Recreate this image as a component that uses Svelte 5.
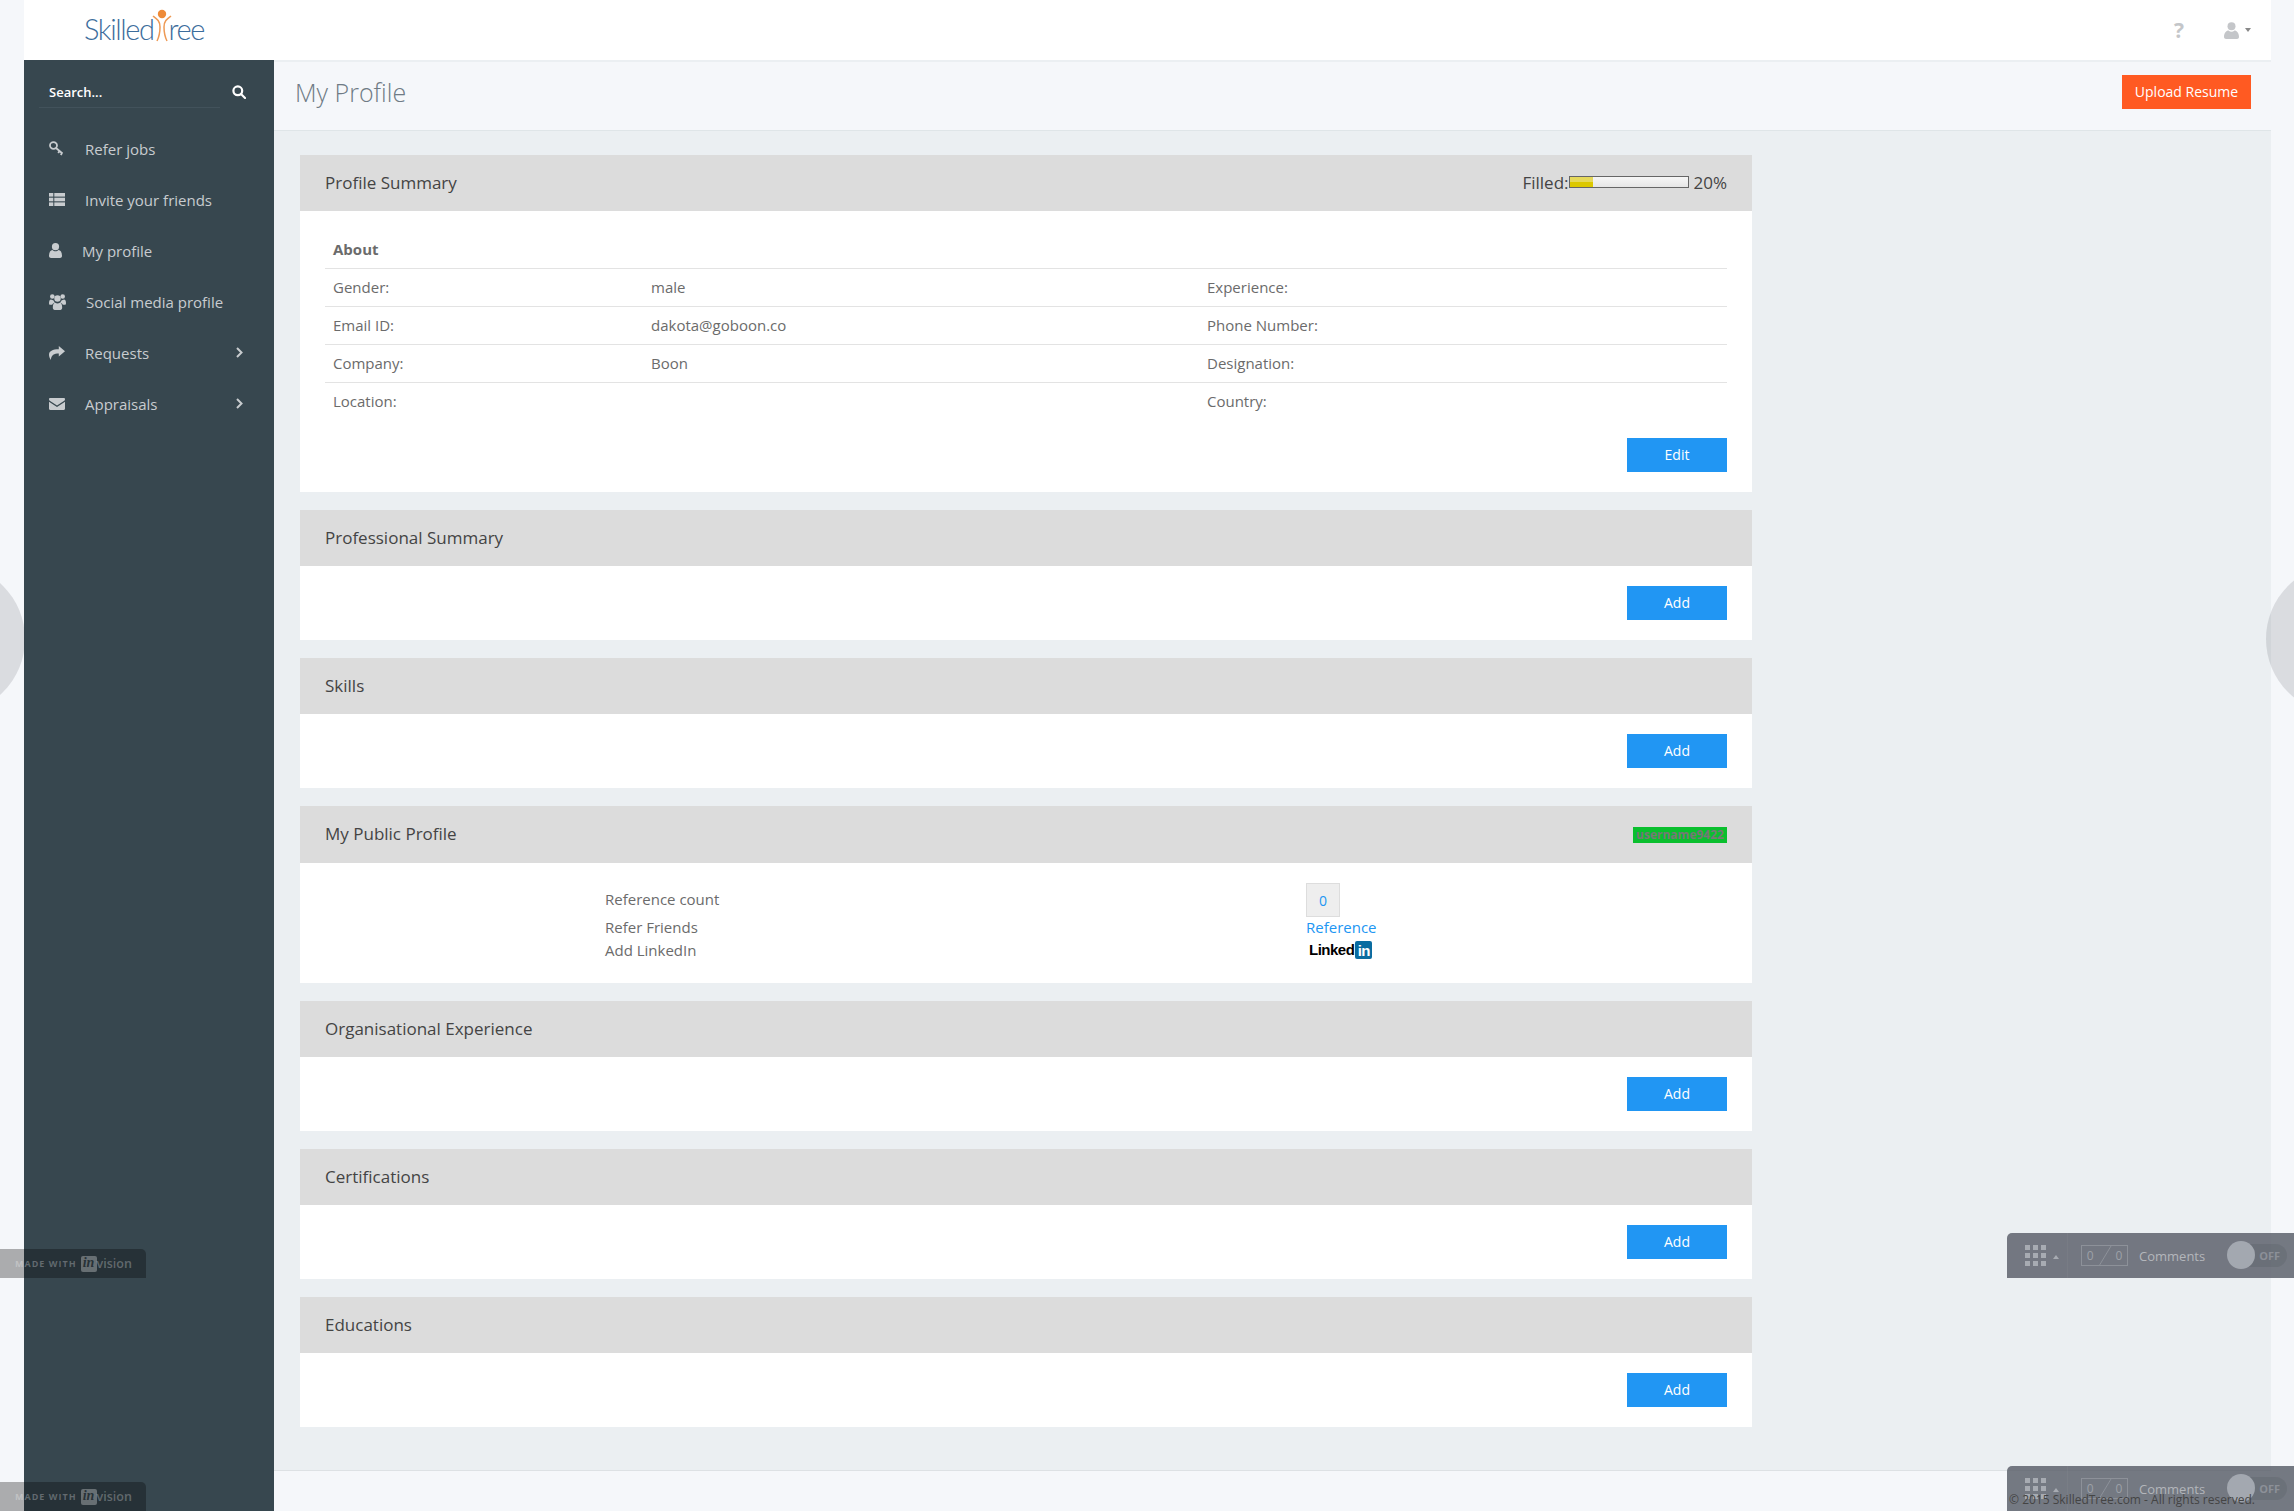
<script>
    const menu = [
        { label: "Refer jobs", icon: "key" },
        { label: "Invite your friends", icon: "list" },
        { label: "My profile", icon: "user" },
        { label: "Social media profile", icon: "users" },
        { label: "Requests", icon: "share", arrow: true },
        { label: "Appraisals", icon: "mail", arrow: true }
    ];

    const about = [
        ["Gender:", "male", "Experience:"],
        ["Email ID:", "dakota@goboon.co", "Phone Number:"],
        ["Company:", "Boon", "Designation:"],
        ["Location:", "", "Country:"]
    ];
</script>

{#snippet addCard(title)}
    <section class="card">
        <div class="card-head"><span>{title}</span></div>
        <div class="add-body"><button class="btn">Add</button></div>
    </section>
{/snippet}

{#snippet commentBar(cls)}
    <div class="comment-bar {cls}">
        <div class="cb-grid">
            <svg width="21" height="21" viewBox="0 0 21 21" fill="#a7abb2">
                <rect x="0" y="0" width="5" height="5"/><rect x="8" y="0" width="5" height="5"/><rect x="16" y="0" width="5" height="5"/>
                <rect x="0" y="8" width="5" height="5"/><rect x="8" y="8" width="5" height="5"/><rect x="16" y="8" width="5" height="5"/>
                <rect x="0" y="16" width="5" height="5"/><rect x="8" y="16" width="5" height="5"/><rect x="16" y="16" width="5" height="5"/>
            </svg>
            <i class="cb-caret"></i>
        </div>
        <div class="cb-rest">
            <div class="cb-count">
                <span>0</span>
                <svg width="14" height="20" viewBox="0 0 14 20"><path d="M1 20L13 0" stroke="#8d9199" fill="none"/></svg>
                <span>0</span>
            </div>
            <span class="cb-label">Comments</span>
            <div class="cb-toggle"><i class="cb-knob"></i><span>OFF</span></div>
        </div>
    </div>
{/snippet}

{#snippet invision(cls)}
    <div class="invision {cls}">
        <span class="inv-made">MADE WITH</span>
        <span class="inv-in">in</span>
        <span class="inv-vision">vision</span>
    </div>
{/snippet}

<div class="page">
    <header class="topbar">
        <div class="logo">
            <span>Skilled</span>
            <svg class="logo-man" width="20" height="33" viewBox="0 0 20 33" fill="none" stroke="#ee9a55" stroke-width="1.500">
                <circle cx="10" cy="5" r="4.200" fill="#ee8a37" stroke="none"/>
                <path d="M1 7C5 10 8 12 8 18C8 24 7 28 5 32"/>
                <path d="M19 7C15 10 12 12 12 18C12 24 13 28 15 32"/>
            </svg>
            <span>ree</span>
        </div>
        <div class="top-icons">
            <span class="help">?</span>
            <svg width="15" height="17" viewBox="0 0 15 17" fill="#c4c6c9">
                <circle cx="7.500" cy="4.200" r="4"/>
                <path d="M0 15C0 10 3 8.500 4.500 8.500C5.500 9.300 6.500 9.700 7.500 9.700C8.500 9.700 9.500 9.300 10.500 8.500C12 8.500 15 10 15 15C15 16.300 14 17 13 17H2C1 17 0 16.300 0 15Z"/>
            </svg>
            <i class="top-caret"></i>
        </div>
    </header>

    <div class="main">
        <aside class="sidebar">
            <div class="search">
                <span>Search...</span>
                <svg width="14" height="14" viewBox="0 0 14 14" fill="none" stroke="#fff" stroke-width="2.200">
                    <circle cx="5.800" cy="5.800" r="4.400"/><path d="M9 9L13 13" stroke-linecap="round"/>
                </svg>
            </div>
            <nav class="menu">
                {#each menu as item}
                    <div class="menu-item">
                        <span class="menu-icon">
                            {#if item.icon === "key"}
                                <svg width="15" height="15" viewBox="0 0 15 15" fill="none" stroke="#c8cccf" stroke-width="1.800">
                                    <ellipse cx="4.500" cy="4.500" rx="3.500" ry="3.300"/><path d="M7 7L13.500 12.500M10.500 10L9.200 12M13 12L11.800 14"/>
                                </svg>
                            {:else if item.icon === "list"}
                                <svg width="16" height="13" viewBox="0 0 16 13" fill="#c8cccf">
                                    <rect width="4.300" height="3.600"/><rect x="5.300" width="10.700" height="3.600"/>
                                    <rect y="4.700" width="4.300" height="3.600"/><rect x="5.300" y="4.700" width="10.700" height="3.600"/>
                                    <rect y="9.400" width="4.300" height="3.600"/><rect x="5.300" y="9.400" width="10.700" height="3.600"/>
                                </svg>
                            {:else if item.icon === "user"}
                                <svg width="13" height="15" viewBox="0 0 13 15" fill="#c8cccf">
                                    <circle cx="6.500" cy="3.700" r="3.600"/>
                                    <path d="M0 13C0 9 1.500 7 3.500 7C4.300 7.800 5.300 8.300 6.500 8.300C7.700 8.300 8.700 7.800 9.500 7C11.500 7 13 9 13 13C13 14.300 12 15 11 15H2C1 15 0 14.300 0 13Z"/>
                                </svg>
                            {:else if item.icon === "users"}
                                <svg width="17" height="16" viewBox="0 0 17 16" fill="#c8cccf">
                                    <circle cx="3.300" cy="2.500" r="2.300"/><circle cx="13.700" cy="2.500" r="2.300"/><circle cx="8.500" cy="4.500" r="3.200"/>
                                    <path d="M0 9C0 6.500 1 5.500 2 5.500C2.800 6 3.500 6.200 4.300 6.300C4.800 7.300 5.300 8 6 8.500C4.500 9 3.600 9.800 3.200 10.800H1C.3 10.800 0 10 0 9ZM17 9C17 6.500 16 5.500 15 5.500C14.200 6 13.500 6.200 12.700 6.300C12.200 7.300 11.700 8 11 8.500C12.500 9 13.400 9.800 13.800 10.800H16C16.700 10.800 17 10 17 9Z"/>
                                    <path d="M3.800 13.500C3.800 10.500 4.800 8.800 6.200 8.800C7 9.300 7.700 9.600 8.500 9.600C9.300 9.600 10 9.300 10.800 8.800C12.200 8.800 13.200 10.500 13.200 13.500C13.200 15 12.400 16 11.300 16H5.700C4.600 16 3.800 15 3.800 13.500Z"/>
                                </svg>
                            {:else if item.icon === "share"}
                                <svg width="16" height="14" viewBox="0 0 16 14" fill="#c8cccf">
                                    <path d="M9.800 0L16 5.300L9.800 10.600V7.400C5 7.400 2.400 8.600 1.800 14C.6 12 0 10.500 0 8.800C0 5 3.500 3.200 9.800 3.200Z"/>
                                </svg>
                            {:else}
                                <svg width="16" height="12" viewBox="0 0 16 12" fill="#c8cccf">
                                    <path d="M0 1.200C0 .5 .5 0 1.200 0H14.800C15.500 0 16 .5 16 1.200C16 2 15.500 2.700 14.900 3.100L8 7.500L1.100 3.100C.5 2.700 0 2 0 1.200Z"/>
                                    <path d="M0 3.800L8 9L16 3.800V10.800C16 11.500 15.500 12 14.800 12H1.200C.5 12 0 11.500 0 10.800Z"/>
                                </svg>
                            {/if}
                        </span>
                        <span class="menu-label" class:tight={item.icon === "user"} class:wide={item.icon === "users"}>{item.label}</span>
                        {#if item.arrow}
                            <svg class="menu-arrow" width="7" height="11" viewBox="0 0 7 11" fill="none" stroke="#c8cccf" stroke-width="2"><path d="M1 1L5.500 5.500L1 10"/></svg>
                        {/if}
                    </div>
                {/each}
            </nav>
        </aside>

        <div class="content">
            <div class="page-title">
                <h1>My Profile</h1>
                <button class="btn-upload">Upload Resume</button>
            </div>

            <div class="cards">
                <section class="card">
                    <div class="card-head">
                        <span>Profile Summary</span>
                        <div class="filled">
                            <span>Filled:</span>
                            <div class="progress"><div class="progress-fill" style="width: 20%"></div></div>
                            <span class="pct">20%</span>
                        </div>
                    </div>
                    <div class="summary-body">
                        <div class="row about-row"><b>About</b></div>
                        {#each about as r}
                            <div class="row">
                                <span class="c1">{r[0]}</span>
                                <span class="c2">{r[1]}</span>
                                <span class="c3">{r[2]}</span>
                            </div>
                        {/each}
                        <div class="edit-wrap"><button class="btn">Edit</button></div>
                    </div>
                </section>

                {@render addCard("Professional Summary")}
                {@render addCard("Skills")}

                <section class="card">
                    <div class="card-head head-tall">
                        <span>My Public Profile</span>
                        <span class="user-badge">username9422</span>
                    </div>
                    <div class="public-body">
                        <span class="pl">Reference count</span>
                        <div class="count-box">0</div>
                        <span class="pl">Refer Friends</span>
                        <span class="ref-link">Reference</span>
                        <span class="pl">Add LinkedIn</span>
                        <div class="linkedin"><span>Linked</span><b>in</b></div>
                    </div>
                </section>

                {@render addCard("Organisational Experience")}
                {@render addCard("Certifications")}
                {@render addCard("Educations")}
            </div>

            <footer class="footer"><span>© 2015 SkilledTree.com - All rights reserved.</span></footer>
        </div>
    </div>

    <div class="side-circle left"></div>
    <div class="side-circle right"></div>
    {@render invision("inv-a")}
    {@render invision("inv-b")}
    {@render commentBar("cb-a")}
    {@render commentBar("cb-b")}
</div>

<style>
    :global(body) {
        margin: 0;
        background: #f5f7fa;
        font-family: "Open Sans", sans-serif;
    }

    .page {
        position: relative;
        height: 1511px;
        overflow: hidden;
        padding: 0 23px 0 24px;
        box-sizing: border-box;
        display: flex;
        flex-flow: column nowrap;
    }

    .topbar {
        height: 60px;
        flex: none;
        background: #fff;
        display: flex;
        align-items: center;
        justify-content: space-between;
        padding: 0 20px 0 60px;
    }

    .logo {
        display: flex;
        align-items: flex-end;
        color: #3c6d9c;
        font-family: Lato, sans-serif;
        font-weight: 300;
        font-size: 29px;
        line-height: 28px;
        letter-spacing: -1.4px;
        margin-top: -3px;
    }

    .logo-man {
        margin: -6px -3px 0 -2px;
        position: relative;
        top: -1px;
    }

    .top-icons {
        display: flex;
        align-items: center;
        color: #c4c6c9;
    }

    .help {
        font-size: 21px;
        font-weight: 700;
        margin-right: 40px;
    }

    .top-caret {
        margin-left: 6px;
        border-top: 4px solid #888;
        border-left: 3.500px solid transparent;
        border-right: 3.500px solid transparent;
    }

    .main {
        flex: 1;
        display: flex;
        min-height: 0;
    }

    .sidebar {
        width: 250px;
        flex: none;
        background: #37474f;
        color: #c8cccf;
        font-size: 15px;
    }

    .search {
        margin-left: 15px;
        width: 207px;
        height: 48px;
        padding: 16px 0 0 10px;
        display: flex;
        align-items: center;
        justify-content: space-between;
        color: #fff;
        font-size: 13px;
        font-weight: 600;
        box-sizing: border-box;
        position: relative;
    }

    .search::after {
        content: "";
        position: absolute;
        left: 0;
        bottom: 0;
        width: 181px;
        height: 1px;
        background: #42525b;
    }

    .menu {
        margin-top: 15px;
    }

    .menu-item {
        height: 51px;
        display: flex;
        align-items: center;
        padding-left: 25px;
        position: relative;
    }

    .menu-icon {
        width: 36px;
        flex: none;
        display: flex;
        align-items: center;
    }

    .menu-label.tight {
        margin-left: -3px;
    }

    .menu-label.wide {
        margin-left: 1px;
    }

    .menu-arrow {
        position: absolute;
        left: 212px;
    }

    .content {
        flex: 1;
        min-width: 0;
        display: flex;
        flex-flow: column nowrap;
        background: #ebeff2;
    }

    .page-title {
        height: 71px;
        flex: none;
        box-sizing: border-box;
        background: #f5f7fa;
        border-top: 2px solid #ebeff2;
        border-bottom: 1px solid #dfe5e8;
        display: flex;
        align-items: center;
        justify-content: space-between;
        padding: 0 20px 8px 21px;
    }

    .page-title h1 {
        margin: 0;
        font-size: 25px;
        font-weight: 300;
        color: #6f7b85;
    }

    .btn-upload {
        height: 34px;
        width: 129px;
        border: 0;
        background: #ff5a22;
        color: #fff;
        font-family: inherit;
        font-size: 14px;
        font-weight: 500;
        padding: 0 0 1px;
    }

    .cards {
        flex: 1;
        padding: 24px 0 0 26px;
        display: flex;
        flex-flow: column nowrap;
        gap: 18px;
    }

    .card {
        width: 1452px;
        background: #fff;
    }

    .card-head {
        height: 56px;
        box-sizing: border-box;
        background: #dcdcdc;
        display: flex;
        align-items: center;
        justify-content: space-between;
        padding: 0 25px 2px;
        color: #444;
        font-size: 17px;
    }

    .head-tall {
        height: 57px;
    }

    .filled {
        display: flex;
        align-items: center;
    }

    .progress {
        width: 120px;
        height: 12px;
        box-sizing: border-box;
        border: 1px solid #666;
        background: linear-gradient(#f6f6f6, #e6e6e6);
    }

    .progress-fill {
        height: 100%;
        background: linear-gradient(#e6d95a 50%, #dcc800 50%);
    }

    .pct {
        margin-left: 5px;
    }

    .summary-body {
        padding: 20px 25px 19px;
        color: #6b6b6b;
        font-size: 15px;
        height: 281px;
        box-sizing: border-box;
    }

    .row {
        height: 38px;
        display: flex;
        align-items: center;
        padding: 0 0 2px 8px;
        border-bottom: 1px solid #e3e3e3;
        box-sizing: border-box;
    }

    .row:nth-child(5) {
        border-bottom: 0;
    }

    .c1 {
        width: 318px;
    }

    .c2 {
        width: 556px;
    }

    .edit-wrap {
        display: flex;
        justify-content: flex-end;
        margin-top: 17px;
    }

    .btn {
        width: 100px;
        height: 34px;
        border: 0;
        background: #2196f3;
        color: #fff;
        font-family: inherit;
        font-size: 14px;
        font-weight: 500;
        padding: 0 0 1px;
    }

    .add-body {
        height: 74px;
        display: flex;
        align-items: center;
        justify-content: flex-end;
        padding-right: 25px;
    }

    .user-badge {
        width: 94px;
        height: 16px;
        background: #0abf2e;
        color: #777;
        font-size: 12px;
        font-weight: 700;
        line-height: 16px;
        text-align: center;
        margin-top: 2px;
    }

    .public-body {
        height: 120px;
        display: grid;
        grid-template-columns: 701px auto;
        grid-template-rows: 33px 23px 23px;
        align-content: start;
        align-items: center;
        padding: 20px 0 0 305px;
        color: #6b6b6b;
        font-size: 15px;
        box-sizing: border-box;
    }

    .pl,
    .ref-link,
    .linkedin {
        margin-bottom: 2px;
    }

    .count-box {
        width: 34px;
        height: 34px;
        align-self: start;
        box-sizing: border-box;
        background: #eee;
        border: 1px solid #ddd;
        color: #2196f3;
        font-size: 14px;
        display: flex;
        align-items: center;
        justify-content: center;
    }

    .ref-link {
        color: #2196f3;
    }

    .linkedin {
        display: flex;
        align-items: center;
        margin-left: 3px;
        color: #000;
        font-family: "Liberation Sans", sans-serif;
        font-size: 15px;
        font-weight: 700;
        letter-spacing: -0.5px;
    }

    .linkedin b {
        margin-left: 1px;
        width: 17px;
        height: 18px;
        background: #0a6ca0;
        color: #fff;
        border-radius: 2px;
        text-align: center;
        line-height: 20px;
    }

    .footer {
        flex: none;
        height: 41px;
        box-sizing: border-box;
        border-top: 1px solid #dde1e4;
        background: #f5f7fa;
        color: #444;
        font-size: 12px;
        text-align: right;
        padding: 20px 16px 0 0;
    }

    .footer span {
        position: relative;
        z-index: 5;
    }

    .side-circle {
        position: absolute;
        top: 564px;
        width: 150px;
        height: 150px;
        border-radius: 50%;
        background: rgba(60, 60, 70, 0.14);
    }

    .side-circle.left {
        left: -125px;
    }

    .side-circle.right {
        right: -122px;
    }

    .invision {
        position: absolute;
        left: 0;
        width: 146px;
        height: 29px;
        padding-left: 15px;
        box-sizing: border-box;
        border-radius: 0 5px 0 0;
        background: rgba(0, 0, 0, 0.3);
        display: flex;
        align-items: center;
        color: rgba(255, 255, 255, 0.28);
        z-index: 6;
    }

    .inv-a {
        top: 1249px;
    }

    .inv-b {
        top: 1482px;
    }

    .inv-made {
        font-size: 9px;
        font-weight: 700;
        letter-spacing: 1px;
        margin-right: 4px;
        white-space: nowrap;
    }

    .inv-in {
        width: 16px;
        height: 16px;
        border-radius: 2px;
        background: rgba(255, 255, 255, 0.3);
        color: #283238;
        font-size: 14px;
        font-style: italic;
        font-weight: 700;
        line-height: 14px;
        text-align: center;
        font-family: "Liberation Serif", serif;
    }

    .inv-vision {
        font-size: 12.500px;
        font-weight: 600;
    }

    .comment-bar {
        position: absolute;
        left: 2007px;
        right: 0;
        height: 45px;
        border-radius: 5px 0 0 0;
        background: rgba(88, 93, 104, 0.82);
        display: flex;
        z-index: 4;
    }

    .cb-a {
        top: 1233px;
    }

    .cb-b {
        top: 1466px;
    }

    .cb-grid {
        width: 61px;
        box-sizing: border-box;
        padding-left: 18px;
        display: flex;
        align-items: center;
        border-right: 1px solid rgba(255, 255, 255, 0.04);
    }

    .cb-caret {
        margin-left: 7px;
        border-bottom: 4px solid #a7abb2;
        border-left: 3.500px solid transparent;
        border-right: 3.500px solid transparent;
        margin-top: 3px;
    }

    .cb-rest {
        flex: 1;
        display: flex;
        align-items: center;
        padding-left: 13px;
    }

    .cb-count {
        width: 47px;
        height: 21px;
        box-sizing: border-box;
        border: 1px solid #8d9199;
        display: flex;
        align-items: center;
        justify-content: center;
        gap: 4px;
        color: #9da1a8;
        font-size: 12px;
    }

    .cb-label {
        margin-left: 11px;
        color: #b3b6bb;
        font-size: 13px;
    }

    .cb-toggle {
        position: relative;
        margin-left: 22px;
        width: 60px;
        height: 23px;
        border-radius: 12px;
        background: rgba(60, 64, 74, 0.15);
        color: #8c9098;
        font-size: 11px;
        font-weight: 700;
        line-height: 23px;
        padding-left: 32px;
        box-sizing: border-box;
    }

    .cb-knob {
        position: absolute;
        left: 0;
        top: -3px;
        width: 28px;
        height: 28px;
        border-radius: 50%;
        background: #a3a8b0;
    }
</style>
